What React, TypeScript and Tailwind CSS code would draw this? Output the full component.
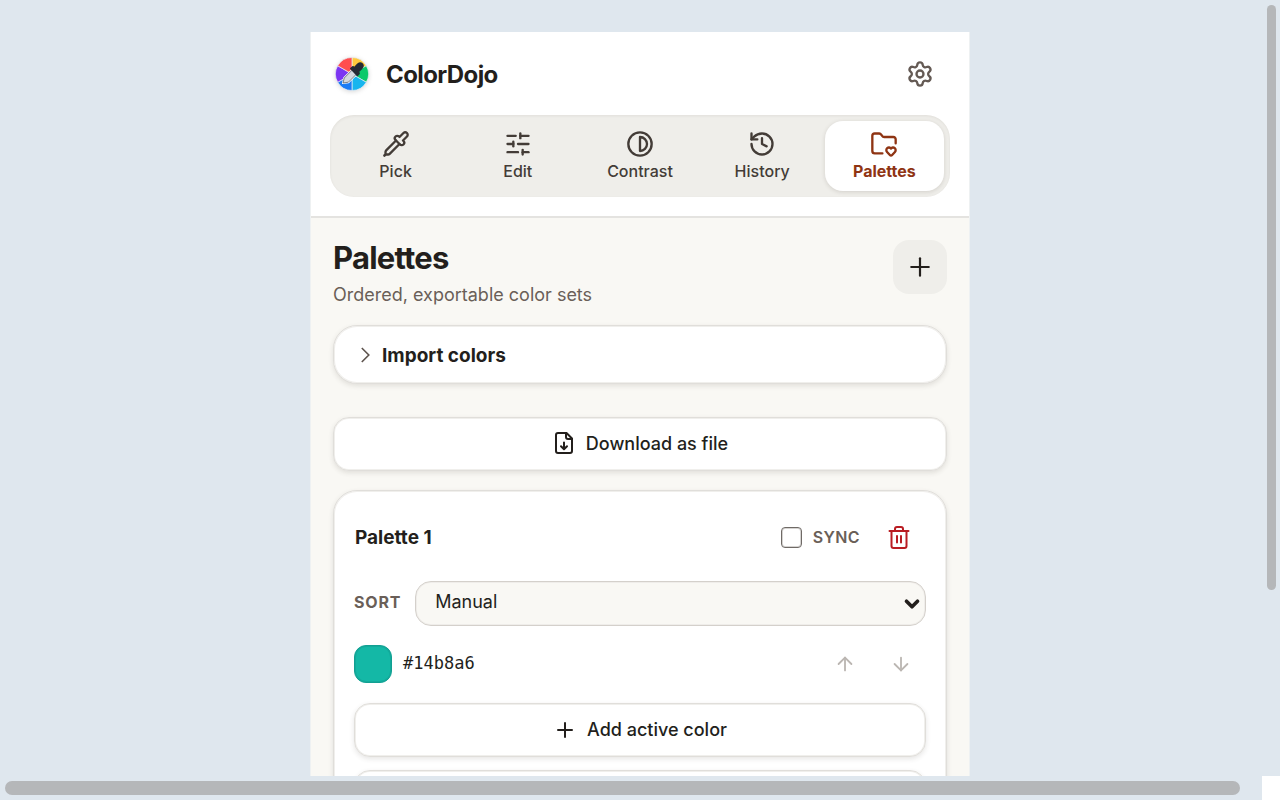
import {
  ArrowDown,
  ArrowUp,
  ChevronDown,
  Contrast,
  FolderHeart,
  History,
  Pipette,
  Plus,
  Settings,
  SlidersHorizontal,
  type LucideIcon,
} from "lucide-react";
import type { ReactNode } from "react";

const tabs: { label: string; icon: LucideIcon; active?: boolean }[] = [
  { label: "Pick", icon: Pipette },
  { label: "Edit", icon: SlidersHorizontal },
  { label: "Contrast", icon: Contrast },
  { label: "History", icon: History },
  { label: "Palettes", icon: FolderHeart, active: true },
];

function Logo() {
  return (
    <svg viewBox="0 0 36 36" className="size-9 drop-shadow-sm" aria-hidden="true">
      <g stroke="#e8ecf4" strokeWidth="0.7">
        <path d="M18 18V1.5A16.5 16.5 0 0 1 32.3 9.75Z" fill="#ffc93c" />
        <path d="M18 18 32.3 9.75A16.5 16.5 0 0 1 32.3 26.25Z" fill="#0ac96b" />
        <path d="M18 18 32.3 26.25A16.5 16.5 0 0 1 18 34.5Z" fill="#17b5ee" />
        <path d="M18 18V34.5A16.5 16.5 0 0 1 3.7 26.25Z" fill="#1b7cf5" />
        <path d="M18 18 3.7 26.25A16.5 16.5 0 0 1 3.7 9.75Z" fill="#7c35f2" />
        <path d="M18 18 3.7 9.75A16.5 16.5 0 0 1 18 1.5Z" fill="#ff4d4f" />
      </g>
      <path
        d="m9 27 1.2-5 8-8 4.2 4.2-8 8Z"
        fill="#d9dde3"
        stroke="#fff"
        strokeWidth="2"
        strokeLinejoin="round"
      />
      <path d="m9 27 1.2-5 8-8 4.2 4.2-8 8Z" fill="#d5d9df" stroke="#4b515b" strokeWidth="0.7" />
      <path
        d="m16.8 12.5 2-1.7 1.6 1 3.2-3.5c1.4-1.5 3.4-1.5 4.5-.4s1 3-.4 4.5l-3.4 3.3.8 1.7-1.8 2Z"
        fill="#252b35"
        stroke="#252b35"
        strokeWidth="1.6"
        strokeLinejoin="round"
      />
    </svg>
  );
}

function FileDownIcon() {
  return (
    <svg
      viewBox="0 0 24 24"
      className="size-6"
      fill="none"
      stroke="currentColor"
      strokeWidth="2"
      strokeLinecap="round"
      strokeLinejoin="round"
      aria-hidden="true"
    >
      <path d="M14.5 1H6a2 2 0 0 0-2 2v16a2 2 0 0 0 2 2h12a2 2 0 0 0 2-2V6.5Z" />
      <path d="M14 1v4a2 2 0 0 0 2 2h4M12 10.5V17M9 14.3l3 3 3-3" />
    </svg>
  );
}

function TrashIcon() {
  return (
    <svg
      viewBox="0 0 24 24"
      className="size-6"
      fill="none"
      stroke="currentColor"
      strokeWidth="2"
      strokeLinecap="round"
      strokeLinejoin="round"
      aria-hidden="true"
    >
      <path d="M2.5 6h19M4.500 6v15a2 2 0 0 0 2 2h11a2 2 0 0 0 2-2V6M8 6V4a2 2 0 0 1 2-2h4a2 2 0 0 1 2 2v2M10 11v6.500M14 11v6.500" />
    </svg>
  );
}

function WideButton({ label, children }: { label?: string; children: ReactNode }) {
  return (
    <button
      type="button"
      aria-label={label}
      className="flex h-[54px] w-full shrink-0 items-center justify-center gap-[10px] rounded-2xl border border-[#e0deda] bg-white text-lg font-medium shadow-[0_2px_5px_rgba(60,50,40,0.12),inset_0_0_0_1px_#f0efec]"
    >
      {children}
    </button>
  );
}

export default function App() {
  return (
    <div className="flex h-screen flex-col bg-[#dfe7ee] font-['Inter',sans-serif] text-[#231f1c]">
      <div className="relative min-h-0 flex-1">
        <div className="h-full overflow-y-auto pt-8 [scrollbar-width:none]">
          <div className="mx-auto w-full max-w-[660px] border-x border-[#eef1f2] bg-[#f9f8f4]">
            <header className="border-b-2 border-[#e4e3e0] bg-white px-[19px] pb-[19px]">
              <div className="flex h-[83px] items-center justify-between pr-[3px] pl-1">
                <div className="flex items-center gap-4">
                  <Logo />
                  <span className="pt-[2px] text-2xl font-bold tracking-tight">ColorDojo</span>
                </div>
                <button
                  type="button"
                  aria-label="Settings"
                  className="flex size-[54px] items-center justify-center text-[#645a54]"
                >
                  <Settings className="size-7" />
                </button>
              </div>
              <nav className="grid grid-cols-5 gap-[3px] rounded-3xl bg-[#efeeea] p-[6px] shadow-[inset_0_1px_3px_rgba(60,50,40,0.08)]">
                {tabs.map(({ label, icon: Icon, active }) => (
                  <button
                    key={label}
                    type="button"
                    className={
                      active
                        ? "flex h-[70px] flex-col items-center justify-center gap-px rounded-[18px] bg-white pt-px text-base font-bold text-[#8f3413] shadow-[0_1px_4px_rgba(60,50,40,0.16)]"
                        : "flex h-[70px] flex-col items-center justify-center gap-px rounded-[18px] pt-px text-base font-medium text-[#433c37]"
                    }
                  >
                    <Icon className="size-7" />
                    <span>{label}</span>
                  </button>
                ))}
              </nav>
            </header>

            <main className="flex flex-col px-[22px] pt-[22px] pb-10">
              <div className="flex items-start justify-between">
                <div>
                  <h1 className="text-[31px] leading-9 font-bold tracking-tight">Palettes</h1>
                  <p className="mt-[7px] text-lg leading-6 text-[#6a5f58]">Ordered, exportable color sets</p>
                </div>
                <button
                  type="button"
                  aria-label="New palette"
                  className="flex size-[54px] items-center justify-center rounded-2xl bg-[#efeeea]"
                >
                  <Plus className="size-[30px]" strokeWidth={1.75} />
                </button>
              </div>

              <details className="mt-[18px] rounded-3xl border border-[#e0deda] bg-white shadow-[0_2px_5px_rgba(60,50,40,0.12),inset_0_0_0_1px_#f0efec]">
                <summary className="flex h-[57px] cursor-pointer list-none items-center gap-3 px-[27px] text-[19px] font-bold">
                  <svg
                    viewBox="0 0 9 16"
                    className="h-4 w-[9px] text-[#5d534d]"
                    fill="none"
                    stroke="currentColor"
                    strokeWidth="1.6"
                    aria-hidden="true"
                  >
                    <path d="m.8 1 7 7-7 7" />
                  </svg>
                  <span className="pt-[3px]">Import colors</span>
                </summary>
              </details>

              <div className="mt-[33px]">
                <WideButton>
                  <FileDownIcon />
                  Download as file
                </WideButton>
              </div>

              <section className="mt-[19px] flex flex-col rounded-3xl border border-[#e0deda] bg-white px-5 pt-[19px] pb-5 shadow-[0_2px_5px_rgba(60,50,40,0.12),inset_0_0_0_1px_#f0efec]">
                <div className="flex h-[54px] items-center justify-between">
                  <h2 className="px-px pt-[2px] text-[19px] font-bold">Palette 1</h2>
                  <div className="flex items-center">
                    <label className="flex items-center gap-[11px] text-base font-semibold tracking-wide text-[#6a5f58]">
                      <input
                        type="checkbox"
                        className="size-[21px] appearance-none rounded-[4px] border border-[#6f6a66] bg-white shadow-[inset_0_0_0_1px_#d6d4d2]"
                      />
                      SYNC
                    </label>
                    <button
                      type="button"
                      aria-label="Delete palette"
                      className="ml-3 flex size-[54px] items-center justify-center text-[#b91c22]"
                    >
                      <TrashIcon />
                    </button>
                  </div>
                </div>

                <div className="mt-[17px] flex items-center gap-[14px]">
                  <label htmlFor="sort" className="pb-[3px] text-base leading-6 font-bold tracking-wider text-[#6a5f58]">
                    SORT
                  </label>
                  <div className="relative flex-1">
                    <select
                      id="sort"
                      className="block h-[45px] w-full appearance-none rounded-2xl border border-[#d4d0cb] bg-[#f9f8f4] pr-8 pb-1 pl-[19px] text-lg shadow-[inset_0_0_0_1px_#efedea]"
                    >
                      <option>Manual</option>
                    </select>
                    <ChevronDown
                      strokeWidth={4}
                      className="pointer-events-none absolute top-1/2 right-[3px] size-[22px] -translate-y-1/2"
                    />
                  </div>
                </div>

                <div className="mt-[11px] flex h-[54px] items-center">
                  <span className="size-[38px] rounded-xl border border-[#129f92] bg-[#14b8a6] shadow-[inset_0_0_0_1px_#13aa9b]" />
                  <span className="ml-[11px] flex-1 font-['DejaVu_Sans_Mono',monospace] text-[17px]">#14b8a6</span>
                  <div className="flex gap-[6px] text-[#bbb6b2]">
                    <button
                      type="button"
                      aria-label="Move up"
                      disabled
                      className="flex size-[50px] items-center justify-center"
                    >
                      <ArrowUp className="size-[22px]" />
                    </button>
                    <button
                      type="button"
                      aria-label="Move down"
                      disabled
                      className="flex size-[50px] items-center justify-center"
                    >
                      <ArrowDown className="size-[22px]" />
                    </button>
                  </div>
                </div>

                <div className="mt-3 flex flex-col gap-[13px]">
                  <WideButton>
                    <Plus className="size-6" />
                    Add active color
                  </WideButton>
                  <WideButton label="Export palette">
                    <FileDownIcon />
                  </WideButton>
                </div>
              </section>
            </main>
          </div>
        </div>
        <div
          className="absolute inset-y-0 right-0 grid w-[18px] grid-rows-[585fr_181fr] py-[5px] pl-[5px]"
          aria-hidden="true"
        >
          <div className="w-[9px] rounded-full bg-[#b5b7b9]" />
        </div>
      </div>
      <div className="flex h-6 shrink-0" aria-hidden="true">
        <div className="flex-1 py-[5px] pr-[22px] pl-[5px]">
          <div className="h-[14px] rounded-full bg-[#b5b7b9]" />
        </div>
        <div className="w-[18px] bg-white" />
      </div>
    </div>
  );
}
